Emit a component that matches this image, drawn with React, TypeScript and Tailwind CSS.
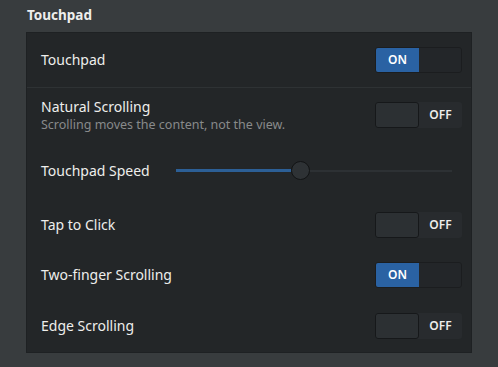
import { useState } from "react"

type Row = {
  id: string
  label: string
  sub?: string
  h: string
  kind: "switch" | "slider"
  on?: boolean
}

const rows: Row[] = [
  { id: "touchpad", label: "Touchpad", h: "h-[55px]", kind: "switch", on: true },
  { id: "natural", label: "Natural Scrolling", sub: "Scrolling moves the content, not the view.", h: "h-[54px]", kind: "switch", on: false },
  { id: "speed", label: "Touchpad Speed", h: "h-[58px]", kind: "slider" },
  { id: "tap", label: "Tap to Click", h: "h-[50px]", kind: "switch", on: false },
  { id: "twofinger", label: "Two-finger Scrolling", h: "h-[50px]", kind: "switch", on: true },
  { id: "edge", label: "Edge Scrolling", h: "h-[52px]", kind: "switch", on: false },
]

function Switch({ on, onToggle }: { on: boolean; onToggle: () => void }) {
  if (on) {
    return (
      <button onClick={onToggle} className="flex h-[26px] w-[87px] overflow-hidden rounded-[3px] border border-[#1b1d1f]">
        <span className="flex w-[43px] items-center justify-center bg-[#2a62a3] text-[12px] font-semibold text-white">ON</span>
        <span className="flex-1 bg-[#232629]" />
      </button>
    )
  }
  return (
    <button onClick={onToggle} className="flex h-[26px] w-[87px] rounded-[3px] bg-[#282b2e]">
      <span className="w-[44px] rounded-[3px] border border-[#16181a] bg-[#2c3033]" />
      <span className="flex flex-1 items-center justify-center text-[12px] font-semibold text-[#eeeeec]">OFF</span>
    </button>
  )
}

function Slider() {
  return (
    <div className="relative mr-[10px] h-[20px] w-[276px]">
      <div className="absolute left-0 right-0 top-[9px] h-[2px] bg-[#2d3134]" />
      <div className="absolute left-0 top-[8px] h-[3px] w-[115px] bg-[#2c5f96]" />
      <div className="absolute left-[115px] top-0 h-[19px] w-[19px] rounded-full border border-[#121415] bg-[#2e3235]" />
    </div>
  )
}

export default function App() {
  const [state, setState] = useState<Record<string, boolean>>(
    Object.fromEntries(rows.filter((r) => r.kind === "switch").map((r) => [r.id, !!r.on])),
  )

  return (
    <div className="h-[367px] w-[498px] bg-[#383c3e] text-[#eeeeec]" style={{ fontFamily: '"Noto Sans", "Open Sans", sans-serif' }}>
      <div className="px-[27px] pt-[5px] pb-[7px] text-[13.5px] font-bold leading-[20px]">Touchpad</div>
      <div className="ml-[26px] w-[446px] border border-[#1e2123] bg-[#232628]">
        {rows.map((row, i) => (
          <div
            key={row.id}
            className={`flex items-center justify-between pl-[14px] pr-[9px] ${row.h} ${i === 0 ? "border-b border-[#2e3234]" : ""}`}
          >
            {row.kind === "slider" ? (
              <>
                <span className="text-[14px] leading-[20px]">{row.label}</span>
                <Slider />
              </>
            ) : (
              <>
                <div className="flex flex-col">
                  <span className="text-[14px] leading-[20px]">{row.label}</span>
                  {row.sub && <span className="text-[12.5px] leading-[16px] text-[#888a8b]">{row.sub}</span>}
                </div>
                <Switch on={state[row.id]} onToggle={() => setState((s) => ({ ...s, [row.id]: !s[row.id] }))} />
              </>
            )}
          </div>
        ))}
      </div>
    </div>
  )
}
